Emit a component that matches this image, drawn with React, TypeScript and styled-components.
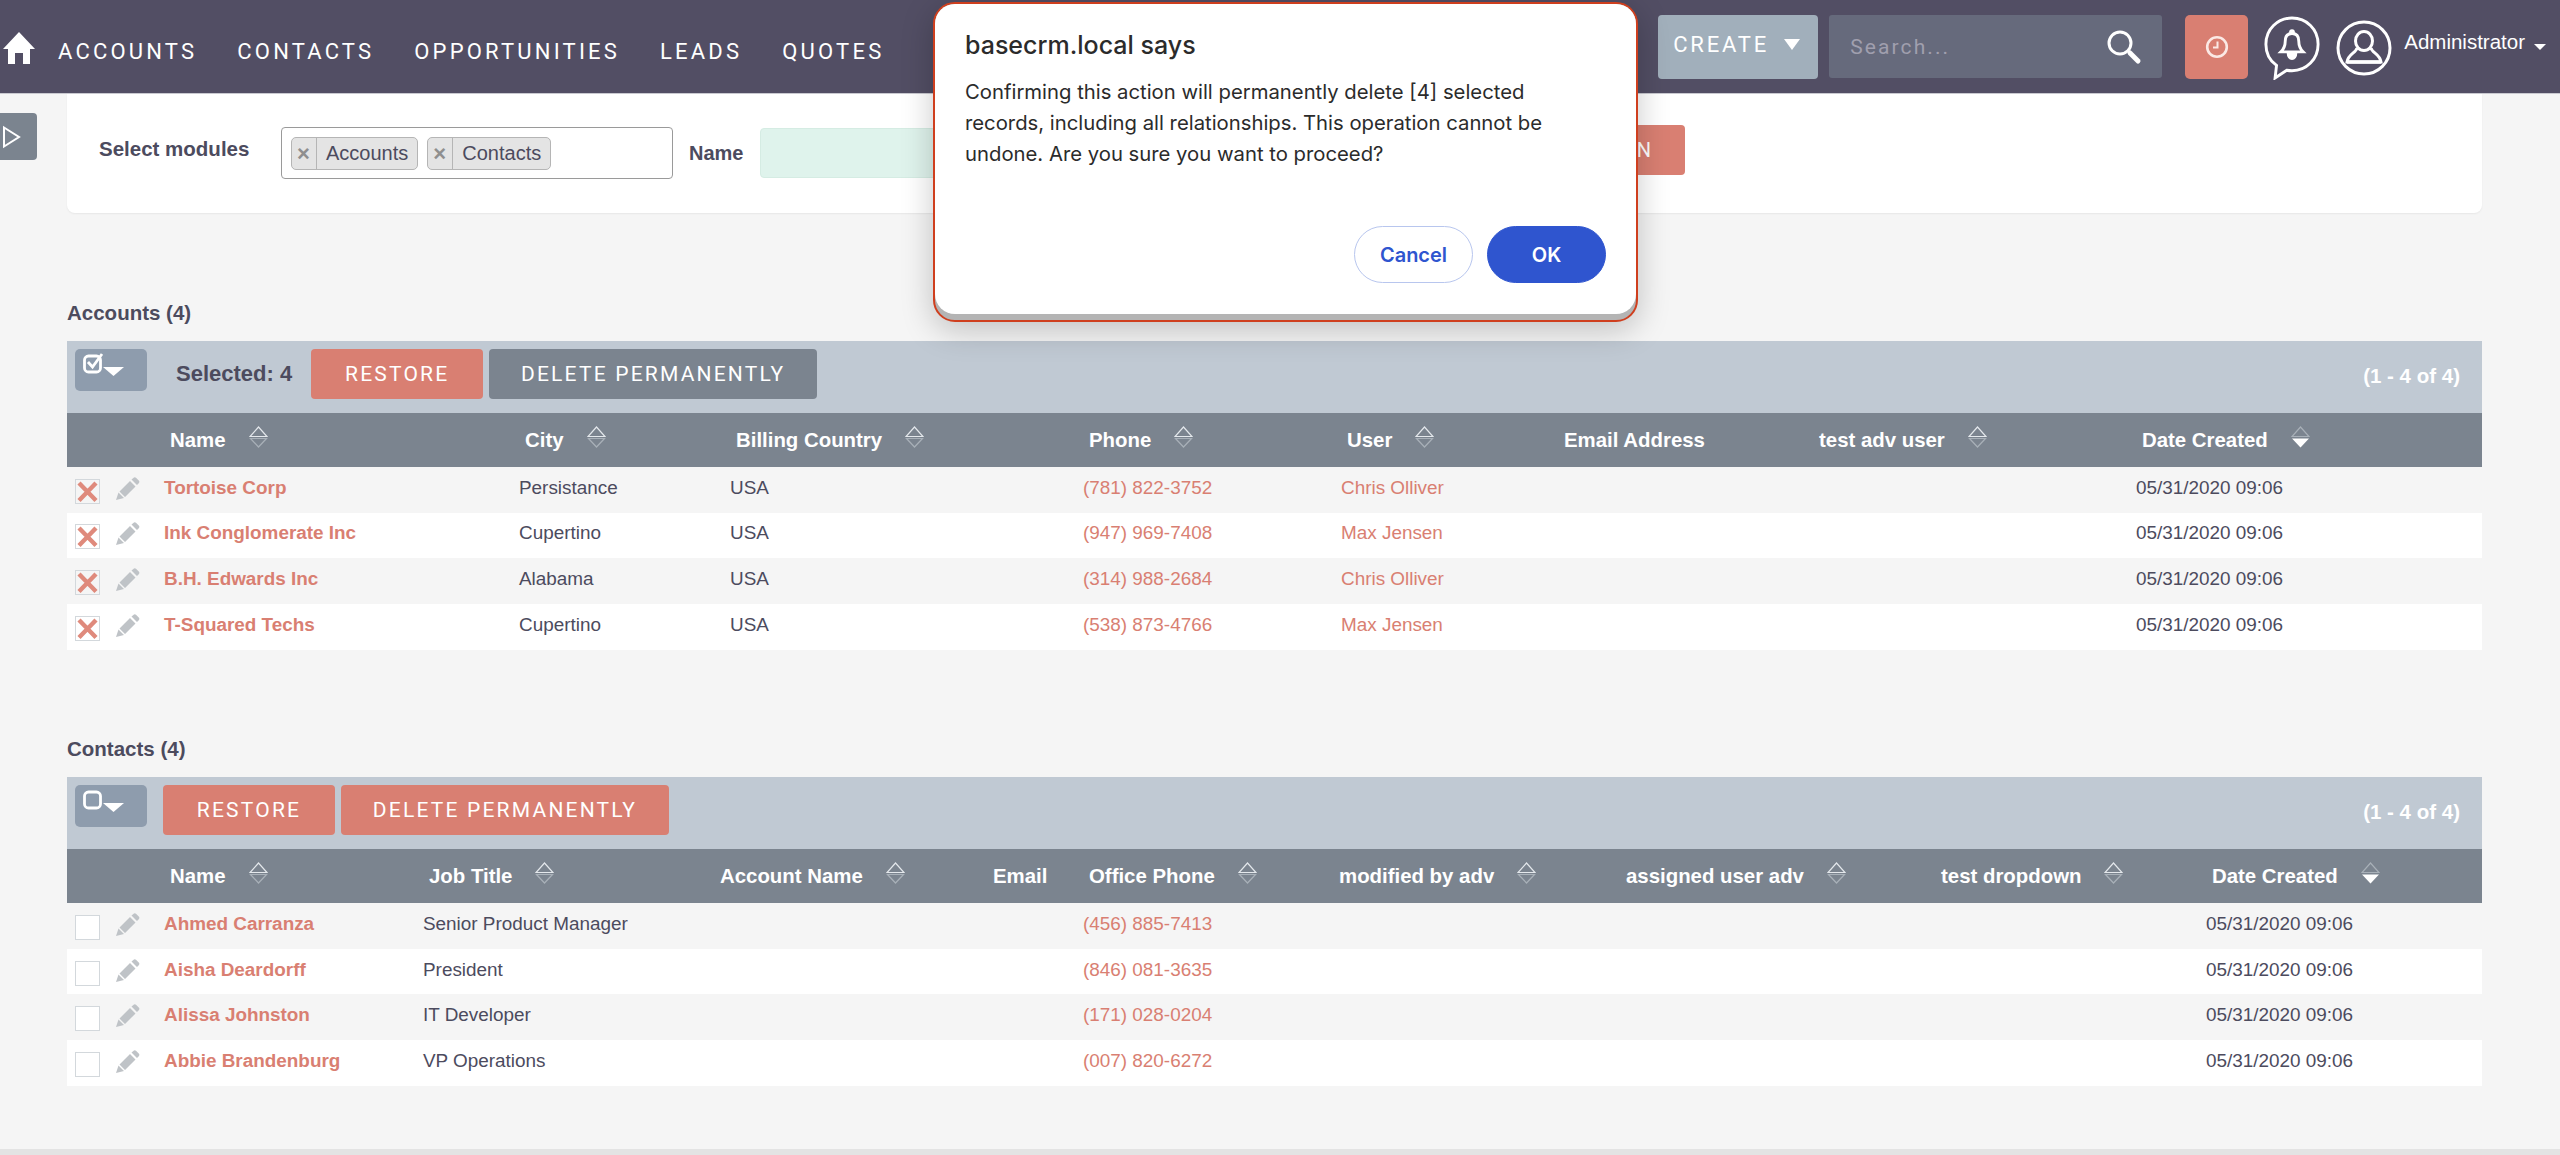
import React from 'react';
import styled, { createGlobalStyle } from 'styled-components';

const GlobalStyle = createGlobalStyle`
  html, body {
    margin: 0;
    padding: 0;
    background: #f5f5f5;
    font-family: "Liberation Sans", Arial, sans-serif;
    overflow: hidden;
  }
  * { box-sizing: border-box; }
`;

const salmon = '#d97f72';
const slate = '#7b848f';

const Page = styled.div`
  position: relative;
  width: 2560px;
  height: 1155px;
  overflow: hidden;
  background: #f5f5f5;
  border-bottom: 6px solid #e3e3e3;
`;

/* top bar */
const TopBar = styled.header`
  height: 94px;
  background: #524e64;
  display: flex;
  align-items: center;
  padding: 0 14px 0 3px;
  border-bottom: 1px solid #c9c9d0;
`;

const HomeLink = styled.a`
  display: flex;
  width: 32px;
  height: 32px;
  margin: 2px 23px 0 0;
`;

const NavList = styled.nav`
  display: flex;
  gap: 40px;
  margin-top: 10px;
`;

const NavItem = styled.a`
  color: #fff;
  font: 400 22px "Roboto", sans-serif;
  letter-spacing: 3.2px;
`;

const TopRight = styled.div`
  margin-left: auto;
  display: flex;
  align-items: center;
`;

const CreateButton = styled.button`
  width: 160px;
  height: 64px;
  border: 0;
  border-radius: 4px;
  background: #a1afbb;
  color: #fff;
  font: 400 22px "Roboto", sans-serif;
  letter-spacing: 2.8px;
  display: flex;
  align-items: center;
  padding: 0 0 5px 15px;
  gap: 15px;
`;

const SearchBox = styled.div`
  width: 333px;
  height: 63px;
  margin-left: 11px;
  background: #666a7c;
  border-radius: 3px;
  display: flex;
  align-items: center;
  padding: 0 20px 0 19px;
`;

const SearchInput = styled.input`
  flex: 1;
  min-width: 0;
  border: 0;
  outline: 0;
  background: transparent;
  color: #fff;
  font: 400 21px "Roboto", sans-serif;
  letter-spacing: 2.1px;
  &::placeholder { color: #a09fae; opacity: 1; }
`;

const ClockButton = styled.button`
  width: 63px;
  height: 64px;
  margin-left: 23px;
  border: 0;
  border-radius: 5px;
  background: ${salmon};
  display: flex;
  align-items: center;
  justify-content: center;
  padding: 0;
`;

const BellIcon = styled.svg`
  width: 58px;
  height: 64px;
  margin-left: 15px;
  margin-top: 2px;
`;

const UserIcon = styled.svg`
  width: 56px;
  height: 56px;
  margin-left: 15px;
  margin-top: 2px;
`;

const UserName = styled.span`
  margin: 0 9px 10px 12px;
  color: #fff;
  font-size: 20.5px;
`;

/* filter panel */
const SideToggle = styled.button`
  position: absolute;
  left: 0;
  top: 113px;
  width: 37px;
  height: 47px;
  border: 0;
  padding: 0 0 0 1px;
  border-radius: 0 4px 4px 0;
  background: ${slate};
  display: flex;
  align-items: center;
`;

const FilterPanel = styled.section`
  height: 119px;
  margin: 0 78px 0 67px;
  padding: 31px 0 0 32px;
  background: #fff;
  border-radius: 0 0 8px 8px;
  box-shadow: 0 1px 2px rgba(0, 0, 0, 0.06);
  display: flex;
  align-items: flex-start;
`;

const ModulesLabel = styled.label`
  width: 182px;
  margin-top: 12px;
  font-weight: 700;
  font-size: 20.5px;
  color: #4c4b5e;
`;

const MultiSelect = styled.div`
  width: 392px;
  height: 52px;
  margin-top: 2px;
  padding: 9px;
  border: 1px solid #9a9a9a;
  border-radius: 4px;
  background: #fff;
  display: flex;
  gap: 9px;
`;

const Tag = styled.span`
  height: 33px;
  border: 1px solid #b5b5b5;
  border-radius: 5px;
  background: #e4e4e4;
  display: flex;
  align-items: center;
  font-size: 20px;
  color: #4c4b5e;
`;

const TagRemove = styled.span`
  width: 25px;
  height: 100%;
  border-right: 1px solid #b5b5b5;
  margin-right: 9px;
  padding-right: 1px;
  display: flex;
  align-items: center;
  justify-content: center;
  color: #8f8f8f;
  font-weight: 700;
  font-size: 22px;
`;

const TagText = styled.span`
  padding-right: 9px;
`;

const NameLabel = styled.label`
  margin: 17px 17px 0 16px;
  font-weight: 700;
  font-size: 20px;
  color: #4c4b5e;
`;

const NameInput = styled.div`
  width: 700px;
  height: 50px;
  margin-top: 3px;
  border: 1px solid #d5ece3;
  border-radius: 4px;
  background: #dff3ec;
`;

const RunButton = styled.button`
  width: 180px;
  height: 50px;
  margin-left: auto;
  margin-right: 797px;
  border: 0;
  border-radius: 4px;
  background: ${salmon};
  color: #fff;
  font: 400 20px "Roboto", sans-serif;
  letter-spacing: 2px;
  text-align: right;
  padding: 0 32px 0 0;
`;

/* record lists */
const ListSection = styled.section<{ $top: number }>`
  margin: ${(p) => p.$top}px 78px 0 67px;
`;

const SectionTitle = styled.h3`
  height: 24px;
  margin: 0 0 16px;
  font-weight: 700;
  font-size: 20.5px;
  line-height: 24px;
  color: #4c4b5e;
`;

const Toolbar = styled.div`
  height: 72px;
  background: #c0c9d3;
  display: flex;
  align-items: flex-start;
  padding: 8px 22px 0 8px;
`;

const BulkSelect = styled.button`
  width: 72px;
  height: 42px;
  border: 0;
  border-radius: 5px;
  background: #8e9cad;
  padding: 0;
  display: flex;
`;

const SelectedCount = styled.span`
  margin: 12px 19px 0 29px;
  font-weight: 700;
  font-size: 22px;
  color: #4c4b5e;
`;

const ActionButton = styled.button<{ $muted?: boolean; $width: number; $first?: boolean }>`
  width: ${(p) => p.$width}px;
  height: 50px;
  margin: 0 6px 0 ${(p) => (p.$first ? 16 : 0)}px;
  border: 0;
  border-radius: 4px;
  background: ${(p) => (p.$muted ? slate : salmon)};
  color: #fff;
  font: 400 21px "Roboto", sans-serif;
  letter-spacing: 2.2px;
`;

const Paging = styled.span`
  margin: 15px 0 0 auto;
  font-weight: 700;
  font-size: 20.5px;
  color: #fff;
`;

const Row = styled.div<{ $cols: string; $white?: boolean }>`
  display: grid;
  grid-template-columns: ${(p) => p.$cols};
  height: 45.67px;
  padding-bottom: 4px;
  align-items: center;
  background: ${(p) => (p.$white ? '#fff' : '#f5f5f5')};
  font-size: 18.9px;
  color: #4c4b5e;
`;

const HeadRow = styled.div<{ $cols: string }>`
  display: grid;
  grid-template-columns: ${(p) => p.$cols};
  height: 54px;
  align-items: center;
  background: ${slate};
`;

const HeadCell = styled.div`
  display: flex;
  align-items: center;
  gap: 23px;
  padding-left: 6px;
  color: #fff;
  font-weight: 700;
  font-size: 20.4px;
  white-space: nowrap;
`;

const SortIcon = styled.svg`
  width: 19px;
  height: 22px;
  margin-top: -6px;
`;

const RowTools = styled.div`
  display: flex;
  align-items: center;
  gap: 16px;
  padding: 7px 0 0 8px;
`;

const CheckBox = styled.span<{ $checked?: boolean }>`
  width: 25px;
  height: 25px;
  border: 1px solid #d3d8dc;
  background: ${(p) => (p.$checked ? 'transparent' : '#fff')};
  display: flex;
`;

const PencilIcon = styled.svg`
  width: 24px;
  height: 24px;
  margin-top: -5px;
`;

const RecordLink = styled.a<{ $bold?: boolean }>`
  color: ${salmon};
  font-weight: ${(p) => (p.$bold ? 700 : 400)};
`;

/* confirm dialog */
const DialogFrame = styled.div`
  position: absolute;
  left: 933px;
  top: 2px;
  width: 705px;
  height: 320px;
  border: 2px solid #cf3f1e;
  border-radius: 22px;
  background: #b4b4b4;
  box-shadow: 0 8px 32px rgba(0, 0, 0, 0.22);
`;

const DialogBody = styled.div`
  height: 310px;
  padding: 25px 30px 0;
  border-radius: 20px;
  background: #fff;
  font-family: "Inter", sans-serif;
  color: #2b2b2b;
`;

const DialogTitle = styled.h2`
  margin: 0 0 15px;
  font-size: 25px;
  line-height: 32px;
  font-weight: 500;
`;

const DialogText = styled.p`
  width: 600px;
  height: 104px;
  margin: 0;
  font-size: 20.3px;
  line-height: 31px;
`;

const DialogActions = styled.div`
  display: flex;
  justify-content: flex-end;
  gap: 14px;
  margin-top: 46px;
`;

const PillButton = styled.button<{ $primary?: boolean }>`
  width: 119px;
  height: 57px;
  border-radius: 29px;
  border: 1.5px solid ${(p) => (p.$primary ? '#2f55cf' : '#b8c6ee')};
  background: ${(p) => (p.$primary ? '#2f55cf' : '#fff')};
  color: ${(p) => (p.$primary ? '#fff' : '#2f55cf')};
  font: 600 20px "Inter", sans-serif;
`;

const Triangle = styled.span<{ $w: number; $h: number }>`
  width: 0;
  height: 0;
  border-left: ${(p) => p.$w / 2}px solid transparent;
  border-right: ${(p) => p.$w / 2}px solid transparent;
  border-top: ${(p) => p.$h}px solid #fff;
`;

const Sort = ({ active }: { active?: boolean }) => (
  <SortIcon viewBox="0 0 19 22">
    <path d="M9.5 1 18 10.500H1Z" fill="none" stroke={active ? '#a8b0b8' : '#e4e8ec'} strokeWidth="1.200" />
    {active ? (
      <path d="M1 12.500h17L9.500 21.500Z" fill="#fff" />
    ) : (
      <path d="M1.500 12.500h16L9.500 21Z" fill="none" stroke="#a8b0b8" strokeWidth="1.200" />
    )}
  </SortIcon>
);

const Pencil = () => (
  <PencilIcon viewBox="0 0 24 24">
    <path d="M0 23 2.500 15.500 8 21Z M3.500 14.500 14 4 19.500 9.500 9 20Z M15.500 2.500 18 .5Q19 0 20 .8L23 3.800Q23.800 4.800 23 6L21 8Z" fill="#bfc3c7" />
  </PencilIcon>
);

const CrossMark = () => (
  <svg width="23" height="23" viewBox="0 0 23 23">
    <path d="M3 3 20 20.500M20 3 3 20.500" stroke="#df8a7c" strokeWidth="4.400" />
  </svg>
);

const BulkIcon = ({ checked }: { checked?: boolean }) => (
  <svg width="72" height="42" viewBox="0 0 72 42">
    <rect x="9.500" y="7" width="16" height="16" rx="4" fill="none" stroke="#fff" strokeWidth="2.800" />
    {checked && <path d="M13 13l4.500 5L27 5" fill="none" stroke="#fff" strokeWidth="2.800" />}
    <path d="M28 18h21L38.500 27Z" fill="#fff" />
  </svg>
);

type Col = { label: string; sort?: boolean; active?: boolean };

const accountCols = '97px 355px 211px 353px 258px 217px 255px 323px 346px';
const contactCols = '97px 259px 291px 273px 96px 250px 287px 315px 271px 276px';

const accountHead: Col[] = [
  { label: 'Name', sort: true },
  { label: 'City', sort: true },
  { label: 'Billing Country', sort: true },
  { label: 'Phone', sort: true },
  { label: 'User', sort: true },
  { label: 'Email Address' },
  { label: 'test adv user', sort: true },
  { label: 'Date Created', sort: true, active: true },
];

const contactHead: Col[] = [
  { label: 'Name', sort: true },
  { label: 'Job Title', sort: true },
  { label: 'Account Name', sort: true },
  { label: 'Email' },
  { label: 'Office Phone', sort: true },
  { label: 'modified by adv', sort: true },
  { label: 'assigned user adv', sort: true },
  { label: 'test dropdown', sort: true },
  { label: 'Date Created', sort: true, active: true },
];

const stamp = '05/31/2020 09:06';

const accounts = [
  ['Tortoise Corp', 'Persistance', 'USA', '(781) 822-3752', 'Chris Olliver', '', '', stamp],
  ['Ink Conglomerate Inc', 'Cupertino', 'USA', '(947) 969-7408', 'Max Jensen', '', '', stamp],
  ['B.H. Edwards Inc', 'Alabama', 'USA', '(314) 988-2684', 'Chris Olliver', '', '', stamp],
  ['T-Squared Techs', 'Cupertino', 'USA', '(538) 873-4766', 'Max Jensen', '', '', stamp],
];

const contacts = [
  ['Ahmed Carranza', 'Senior Product Manager', '', '', '(456) 885-7413', '', '', '', stamp],
  ['Aisha Deardorff', 'President', '', '', '(846) 081-3635', '', '', '', stamp],
  ['Alissa Johnston', 'IT Developer', '', '', '(171) 028-0204', '', '', '', stamp],
  ['Abbie Brandenburg', 'VP Operations', '', '', '(007) 820-6272', '', '', '', stamp],
];

function RecordTable({ cols, head, rows, links, checked }: {
  cols: string;
  head: Col[];
  rows: string[][];
  links: number[];
  checked?: boolean;
}) {
  return (
    <>
      <HeadRow $cols={cols}>
        <span />
        {head.map((c) => (
          <HeadCell key={c.label}>
            {c.label}
            {c.sort && <Sort active={c.active} />}
          </HeadCell>
        ))}
      </HeadRow>
      {rows.map((row, i) => (
        <Row key={row[0]} $cols={cols} $white={i % 2 === 1}>
          <RowTools>
            <CheckBox $checked={checked}>{checked && <CrossMark />}</CheckBox>
            <Pencil />
          </RowTools>
          {row.map((value, j) => (
            <div key={j}>
              {links.includes(j) ? <RecordLink $bold={j === 0}>{value}</RecordLink> : value}
            </div>
          ))}
        </Row>
      ))}
    </>
  );
}

export default function App() {
  return (
    <Page>
      <GlobalStyle />
      <TopBar>
        <HomeLink>
          <svg width="32" height="32" viewBox="0 0 32 32">
            <path d="M16 0 32 17h-5v15h-7V21h-8v11H5V17H0Z" fill="#fff" />
          </svg>
        </HomeLink>
        <NavList>
          <NavItem>ACCOUNTS</NavItem>
          <NavItem>CONTACTS</NavItem>
          <NavItem>OPPORTUNITIES</NavItem>
          <NavItem>LEADS</NavItem>
          <NavItem>QUOTES</NavItem>
        </NavList>
        <TopRight>
          <CreateButton>
            CREATE
            <Triangle $w={17} $h={11} />
          </CreateButton>
          <SearchBox>
            <SearchInput placeholder="Search..." />
            <svg width="36" height="36" viewBox="0 0 36 36">
              <circle cx="14" cy="14" r="11" fill="none" stroke="#fff" strokeWidth="3" />
              <path d="M24 24l8 8" stroke="#fff" strokeWidth="5" strokeLinecap="round" />
            </svg>
          </SearchBox>
          <ClockButton>
            <svg width="24" height="24" viewBox="0 0 24 24" fill="none" stroke="#fbe9e5" strokeWidth="2.600">
              <circle cx="12" cy="12" r="9.800" />
              <path d="M12.500 6.500v6H8" strokeWidth="2" />
            </svg>
          </ClockButton>
          <BellIcon viewBox="0 0 60 66" fill="none" stroke="#fff" strokeWidth="3">
            <path d="M30 2C15 2 3 13.500 3 29c0 9 4 17 11 22l-1.500 13 12-8c2 .400 3.500.500 5.500.500 15 0 27-12 27-27.500S45 2 30 2Z" />
            <path d="M30 18c-5 0-7 3.500-7 8 0 5-1.500 8-4.500 11h23c-3-3-4.500-6-4.500-11 0-4.500-2-8-7-8Z" />
            <path d="M26 38c0 8 8 8 8 0Z" fill="#fff" />
            <circle cx="30" cy="16.500" r="1.500" fill="#fff" />
          </BellIcon>
          <UserIcon viewBox="0 0 56 56" fill="none" stroke="#fff" strokeWidth="3">
            <circle cx="28" cy="28" r="26" />
            <ellipse cx="28" cy="21" rx="8.500" ry="9.500" />
            <path d="M21 28c-1 5-9 6-10 14h34c-1-8-9-9-10-14" />
            <path d="M11 42h34" strokeWidth="3.500" />
          </UserIcon>
          <UserName>Administrator</UserName>
          <Triangle $w={13} $h={6} />
        </TopRight>
      </TopBar>

      <SideToggle>
        <svg width="22" height="26" viewBox="0 0 22 26">
          <path d="M3 3.500 18 13 3 22.500Z" fill="none" stroke="#fff" strokeWidth="2" />
        </svg>
      </SideToggle>

      <FilterPanel>
        <ModulesLabel>Select modules</ModulesLabel>
        <MultiSelect>
          <Tag><TagRemove>×</TagRemove><TagText>Accounts</TagText></Tag>
          <Tag><TagRemove>×</TagRemove><TagText>Contacts</TagText></Tag>
        </MultiSelect>
        <NameLabel>Name</NameLabel>
        <NameInput />
        <RunButton>RUN</RunButton>
      </FilterPanel>

      <ListSection $top={88}>
        <SectionTitle>Accounts (4)</SectionTitle>
        <Toolbar>
          <BulkSelect><BulkIcon checked /></BulkSelect>
          <SelectedCount>Selected: 4</SelectedCount>
          <ActionButton $width={172}>RESTORE</ActionButton>
          <ActionButton $width={328} $muted>DELETE PERMANENTLY</ActionButton>
          <Paging>(1 - 4 of 4)</Paging>
        </Toolbar>
        <RecordTable cols={accountCols} head={accountHead} rows={accounts} links={[0, 3, 4]} checked />
      </ListSection>

      <ListSection $top={87.5}>
        <SectionTitle>Contacts (4)</SectionTitle>
        <Toolbar>
          <BulkSelect><BulkIcon /></BulkSelect>
          <ActionButton $width={172} $first>RESTORE</ActionButton>
          <ActionButton $width={328}>DELETE PERMANENTLY</ActionButton>
          <Paging>(1 - 4 of 4)</Paging>
        </Toolbar>
        <RecordTable cols={contactCols} head={contactHead} rows={contacts} links={[0, 4]} />
      </ListSection>

      <DialogFrame>
        <DialogBody>
          <DialogTitle>basecrm.local says</DialogTitle>
          <DialogText>
            Confirming this action will permanently delete [4] selected records, including all relationships. This operation cannot be undone. Are you sure you want to proceed?
          </DialogText>
          <DialogActions>
            <PillButton>Cancel</PillButton>
            <PillButton $primary>OK</PillButton>
          </DialogActions>
        </DialogBody>
      </DialogFrame>
    </Page>
  );
}
